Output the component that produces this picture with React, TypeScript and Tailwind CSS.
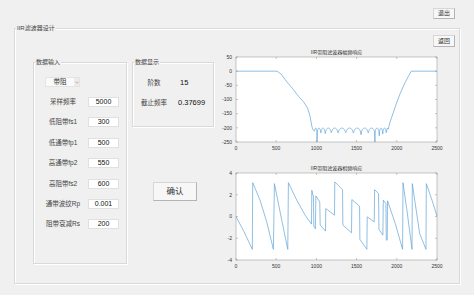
import React from 'react';

type Pt = [number, number];

const font = "font-['Liberation_Sans','Noto_Sans_CJK_SC',sans-serif]";

// magnitude response of the band-stop filter (dB)
const magnitude = (): Pt[] => {
  const pts: Pt[] = [
    [0, 0], [510, 0], [560, -10], [630, -37], [700, -60], [780, -90], [840, -108],
    [890, -130], [920, -158], [940, -190], [952, -204],
  ];
  const nulls: Pt[] = [
    [975, -212], [1008, -250], [1055, -218], [1110, -220], [1185, -217], [1270, -218],
    [1365, -217], [1460, -218], [1555, -224], [1645, -218], [1728, -250], [1782, -228],
    [1825, -222], [1868, -217],
  ];
  pts.push(nulls[0]);
  for (let i = 1; i < nulls.length; i++) {
    const [a, da] = nulls[i - 1];
    const [b, db] = nulls[i];
    for (let k = 1; k <= 16; k++) {
      const t = k / 16;
      const d = t < 0.5 ? da : db;
      const s = Math.sin(Math.PI * t);
      pts.push([a + (b - a) * t, -201 + 10 * Math.log10(s * s + Math.pow(10, (d + 201) / 10))]);
    }
  }
  pts.push(
    [1880, -202], [1895, -204], [1902, -195], [1915, -180], [1940, -160], [1990, -118],
    [2040, -80], [2100, -42], [2150, -15], [2180, 0], [2500, 0],
  );
  return pts;
};

// wrapped phase response (rad)
const phase: Pt[] = [
  [0, 0], [100, -1.4], [203, -3.02], [208, 3.11], [299, 1.5], [382, -0.49], [465, -3.02],
  [478, 3.02], [569, -0.34], [644, -3.02], [652, 3.11], [756, 1.5], [860, 0.12], [939, -0.7],
  [943, 2.41], [963, 1.8], [968, -0.88], [988, -1.13], [993, 1.89], [1042, 1.34], [1047, -0.79],
  [1113, -1.34], [1117, 0.73], [1225, 0.12], [1229, 3.18], [1325, 2.47], [1329, -0.79],
  [1437, -1.5], [1441, 1.56], [1537, 0.95], [1541, -2.11], [1628, -3.02], [1632, -0.03],
  [1719, -0.49], [1724, 2.47], [1773, 2.11], [1778, -1.19], [1827, -1.71], [1832, 1.5],
  [1865, 1.19], [1869, -2.17], [1881, -2.17], [1885, 1.44], [1981, -0.64], [2072, -3.02],
  [2077, 3.11], [2126, 0.58], [2189, -3.02], [2193, 3.02], [2284, -1.56], [2363, -3.02],
  [2367, 3.02], [2438, 1.5], [2500, 0.03],
];

interface ChartProps {
  title: string;
  height: number;
  top: number;
  plotH: number;
  yMin: number;
  yMax: number;
  yTicks: number[];
  data: Pt[];
}

const Chart: React.FC<ChartProps> = ({ title, height, top, plotH, yMin, yMax, yTicks, data }) => {
  const left = 20;
  const plotW = 201;
  const sx = (x: number) => left + (x / 2500) * plotW;
  const sy = (y: number) => top + ((yMax - y) / (yMax - yMin)) * plotH;
  const xTicks = [0, 500, 1000, 1500, 2000, 2500];
  const d = data.map(([x, y], i) => `${i ? 'L' : 'M'}${sx(x).toFixed(2)} ${sy(y).toFixed(2)}`).join(' ');

  return (
    <svg width={232} height={height} className="block" fontFamily="'Liberation Sans', 'Noto Sans CJK SC', sans-serif">
      <text x={left + plotW / 2} y={top - 3} fontSize={5} textAnchor="middle" fill="#333">
        {title}
      </text>
      <rect x={left} y={top} width={plotW} height={plotH} fill="#fff" />
      <path d={d} fill="none" stroke="#62a3d6" strokeWidth={0.7} strokeLinejoin="round" />
      <rect x={left} y={top} width={plotW} height={plotH} fill="none" stroke="#8f8f8f" strokeWidth={0.5} />
      {xTicks.map((t) => (
        <g key={t}>
          <line x1={sx(t)} x2={sx(t)} y1={top + plotH} y2={top + plotH - 2} stroke="#8f8f8f" strokeWidth={0.5} />
          <line x1={sx(t)} x2={sx(t)} y1={top} y2={top + 2} stroke="#8f8f8f" strokeWidth={0.5} />
          <text x={sx(t)} y={top + plotH + 7.5} fontSize={5} textAnchor="middle" fill="#333">
            {t}
          </text>
        </g>
      ))}
      {yTicks.map((t) => (
        <g key={t}>
          <line x1={left} x2={left + 2} y1={sy(t)} y2={sy(t)} stroke="#8f8f8f" strokeWidth={0.5} />
          <line x1={left + plotW} x2={left + plotW - 2} y1={sy(t)} y2={sy(t)} stroke="#8f8f8f" strokeWidth={0.5} />
          <text x={left - 4} y={sy(t) + 1.8} fontSize={5} textAnchor="end" fill="#333">
            {t}
          </text>
        </g>
      ))}
    </svg>
  );
};

const Button: React.FC<{ label: string; className: string }> = ({ label, className }) => (
  <button
    className={`flex items-center justify-center bg-[#f7f7f7] border border-[#d6d6d6] border-r-[#b4b4b4] border-b-[#b4b4b4] text-[#333] ${className}`}
  >
    {label}
  </button>
);

const Panel: React.FC<{ title: string; className: string; children?: React.ReactNode }> = ({ title, className, children }) => (
  <div className={`relative border border-[#d9d9d9] shadow-[1px_1px_0_#ffffff,inset_1px_1px_0_#ffffff] ${className}`}>
    <span className="absolute left-[1px] top-[-5px] bg-[#f0f0f0] px-[1px] text-[6px] leading-[9px] text-[#444]">{title}</span>
    {children}
  </div>
);

const params = [
  { label: '采样频率', value: '5000' },
  { label: '低阻带fs1', value: '300' },
  { label: '低通带fp1', value: '500' },
  { label: '高通带fp2', value: '550' },
  { label: '高阻带fs2', value: '600' },
  { label: '通带波纹Rp', value: '0.001' },
  { label: '阻带衰减Rs', value: '200' },
];

export default function App() {
  return (
    <div className={`w-[474px] h-[295px] overflow-hidden bg-[#f0f0f0] pt-[8px] ${font}`}>
      <div className="flex justify-end pr-[19px]">
        <Button label="退出" className="w-[22px] h-[11px] text-[6px]" />
      </div>

      <Panel title="IIR滤波器设计" className="ml-[14px] mt-[9px] w-[446px] h-[256px]">
        <div className="flex justify-end pt-[6px] pr-[4px]">
          <Button label="返回" className="w-[22px] h-[12px] text-[6px]" />
        </div>

        <div className="flex items-start">
          <Panel title="数据输入" className="ml-[18px] mt-[15px] w-[94px] h-[202px]">
            <div className="ml-[11px] mt-[14px] flex h-[10px] w-[35px] items-center bg-[#fafafa] border border-[#e4e4e4]">
              <span className="flex-1 text-center text-[6.5px] leading-[8px] text-[#333]">带阻</span>
              <span className="flex h-full w-[5px] items-center justify-center bg-[#ebebeb]">
                <svg width="4" height="3" viewBox="0 0 4 3">
                  <path d="M0.5 0.8 L2 2.2 L3.5 0.8" fill="none" stroke="#888" strokeWidth="0.6" />
                </svg>
              </span>
            </div>
            <div className="mt-[10px] flex flex-col gap-[10.4px]">
              {params.map((p) => (
                <div key={p.label} className="flex h-[10px] items-center">
                  <span className="ml-[9px] w-[40px] whitespace-nowrap text-center text-[6.5px] leading-[8px] text-[#444]">
                    {p.label}
                  </span>
                  <span className="ml-[5px] flex h-[10px] w-[31px] items-center justify-center bg-white border border-[#e0e0e0] text-[7px] leading-[8px] text-[#111]">
                    {p.value}
                  </span>
                </div>
              ))}
            </div>
          </Panel>

          <div className="ml-[5px] mt-[15px] flex w-[82px] flex-col">
            <Panel title="数据显示" className="w-[82px] h-[65px]">
              <div className="mt-[15px] flex flex-col gap-[10px]">
                <div className="flex h-[10px] items-center">
                  <span className="ml-[4px] w-[34px] text-center text-[6.5px] text-[#444]">阶数</span>
                  <span className="ml-[9px] text-[7.5px] text-[#111]">15</span>
                </div>
                <div className="flex h-[10px] items-center">
                  <span className="ml-[4px] w-[34px] text-center text-[6.5px] text-[#444]">截止频率</span>
                  <span className="ml-[7px] text-[7.5px] text-[#111]">0.37699</span>
                </div>
              </div>
            </Panel>
            <Button label="确认" className="ml-[21px] mt-[55px] w-[44px] h-[19px] text-[8.5px] border-[#b8b8b8] border-r-[#a0a0a0] border-b-[#a0a0a0]" />
          </div>

          <div className="ml-[2px] flex flex-col">
            <Chart
              title="IIR带阻滤波器幅频响应"
              height={106}
              top={10}
              plotH={85}
              yMin={-250}
              yMax={50}
              yTicks={[50, 0, -50, -100, -150, -200, -250]}
              data={magnitude()}
            />
            <Chart
              title="IIR带阻滤波器相频响应"
              height={120}
              top={20}
              plotH={87}
              yMin={-4}
              yMax={4}
              yTicks={[4, 2, 0, -2, -4]}
              data={phase}
            />
          </div>
        </div>
      </Panel>
    </div>
  );
}
